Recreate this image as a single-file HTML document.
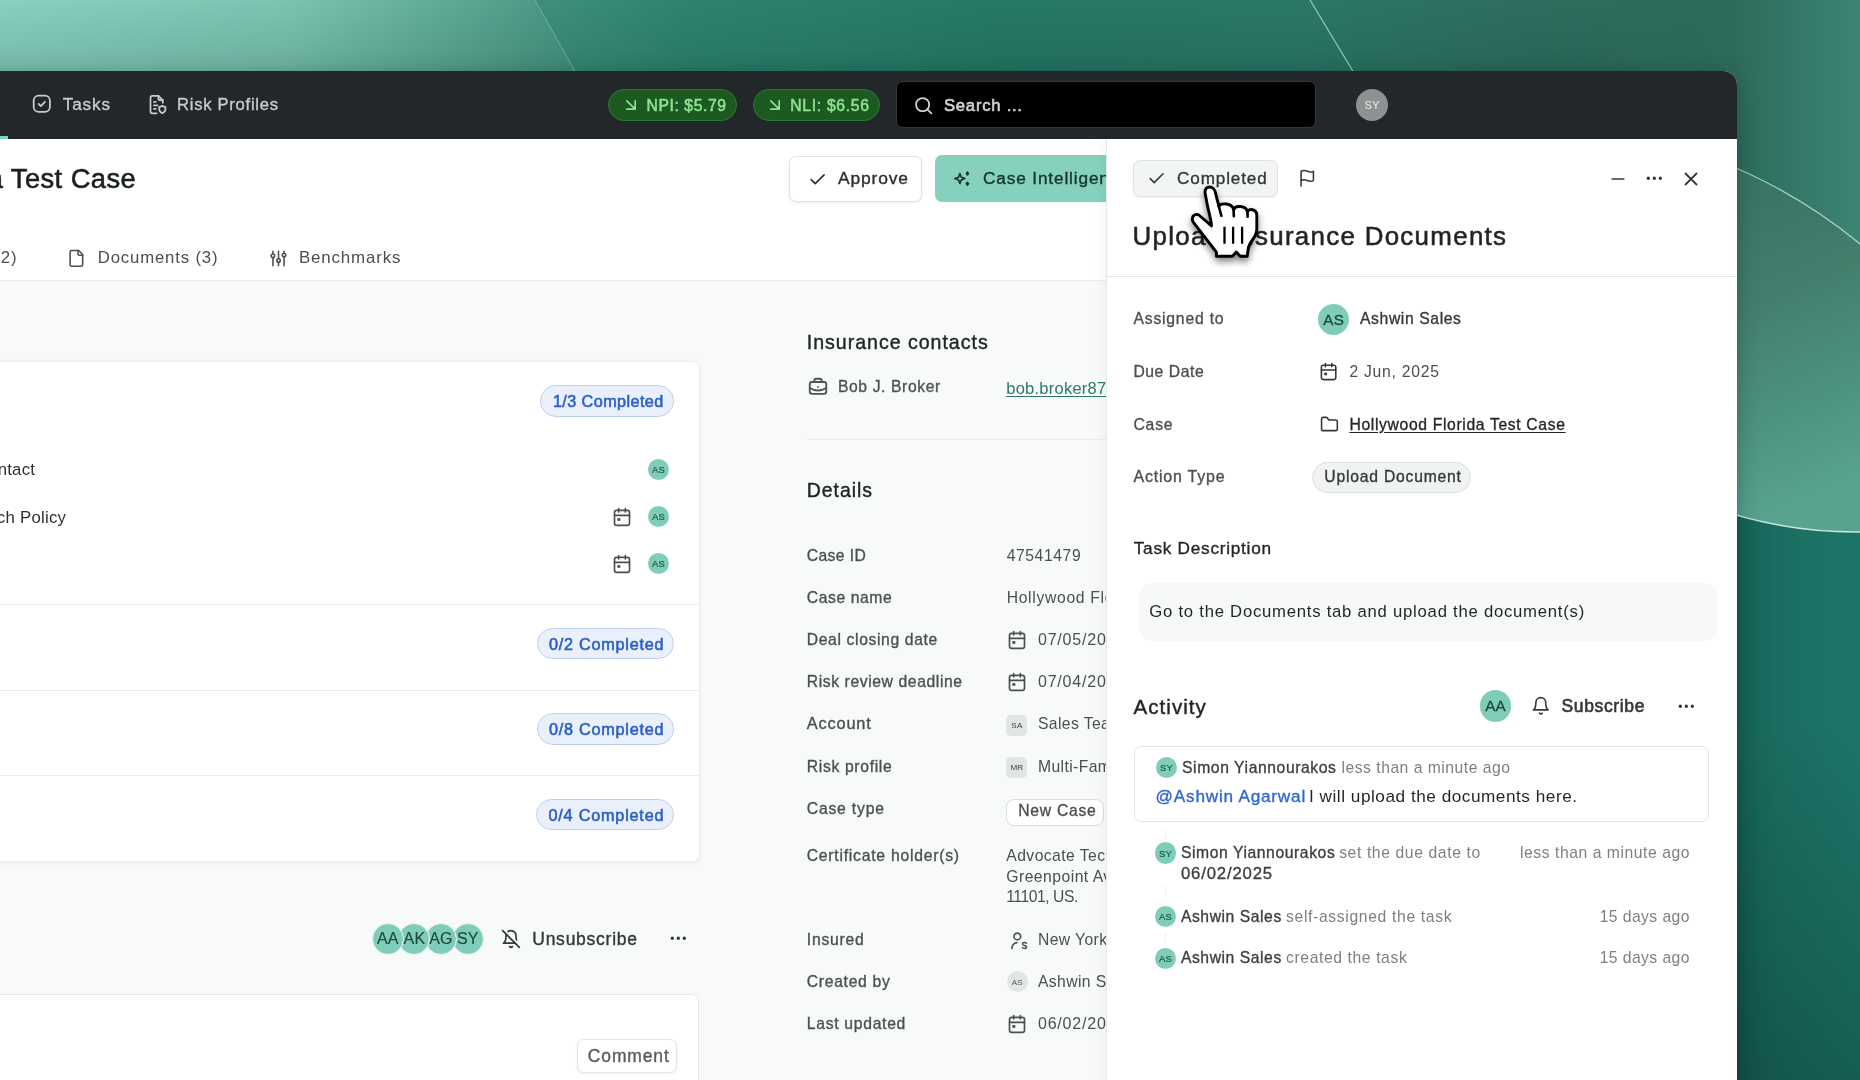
<!DOCTYPE html>
<html lang="en"><head><meta charset="utf-8"><title>Upload Insurance Documents</title>
<style>
html,body{margin:0;padding:0}
body{width:1860px;height:1080px;overflow:hidden;position:relative;background:#2a7a69;font-family:"Liberation Sans",sans-serif}
.a{position:absolute;box-sizing:border-box}
.t{position:absolute;white-space:nowrap;font-family:"Liberation Sans",sans-serif}
.ly{position:absolute;left:0;top:0;width:1860px;height:1080px;will-change:transform;pointer-events:none}
svg.i{position:absolute;fill:none;stroke-width:2;stroke-linecap:round;stroke-linejoin:round;overflow:visible}
.pill{position:absolute;box-sizing:border-box;border-radius:16px;background:#e9f0fc;border:1px solid #bfd0ee;z-index:3}
.av{position:absolute;border-radius:50%;background:#7fcdb8;z-index:3}
.sub{top:923.2px;width:32px;height:32px;box-sizing:border-box;border:1px solid #eef6f3;font-size:16px;line-height:30px;text-align:center;color:#1c4a3e;letter-spacing:.2px;-webkit-text-stroke:.15px #1c4a3e}
.hr{position:absolute;height:1px;background:#e9ecec;z-index:3}
</style></head><body>
<!-- background -->
<svg class="a" style="left:0;top:0;z-index:0" width="1860" height="1080" viewBox="0 0 1860 1080">
<defs>
<linearGradient id="g0" x1="0" y1="0" x2="1860" y2="0" gradientUnits="userSpaceOnUse">
<stop offset="0" stop-color="#3f927e"/><stop offset="0.30" stop-color="#3d8f7b"/><stop offset="0.37" stop-color="#2d8470"/><stop offset="0.54" stop-color="#267967"/><stop offset="0.70" stop-color="#2b7868"/><stop offset="0.81" stop-color="#2f6e60"/><stop offset="0.914" stop-color="#2d6a5b"/><stop offset="0.934" stop-color="#2e6b5c"/><stop offset="0.967" stop-color="#347869"/><stop offset="1" stop-color="#3c8574"/></linearGradient>
<linearGradient id="g1" x1="0" y1="0" x2="575" y2="0" gradientUnits="userSpaceOnUse">
<stop offset="0" stop-color="#8ad1c1"/><stop offset="0.5" stop-color="#7cc4b2"/><stop offset="0.82" stop-color="#5ba693"/><stop offset="1" stop-color="#469481"/></linearGradient>
<linearGradient id="gd" x1="1737" y1="0" x2="1860" y2="0" gradientUnits="userSpaceOnUse">
<stop offset="0" stop-color="#166256"/><stop offset="0.35" stop-color="#1a6e61"/><stop offset="1" stop-color="#1c7668"/></linearGradient>
<linearGradient id="gm" x1="1737" y1="0" x2="1860" y2="0" gradientUnits="userSpaceOnUse">
<stop offset="0" stop-color="#2e6b5c"/><stop offset="0.5" stop-color="#347869"/><stop offset="1" stop-color="#3c8574"/></linearGradient>
<linearGradient id="gl" x1="1737" y1="200" x2="1860" y2="480" gradientUnits="userSpaceOnUse">
<stop offset="0" stop-color="#3a7464"/><stop offset="0.35" stop-color="#447f6e"/><stop offset="0.7" stop-color="#4d9280"/><stop offset="1" stop-color="#58a390"/></linearGradient>
<linearGradient id="gv" x1="0" y1="720" x2="0" y2="1080" gradientUnits="userSpaceOnUse"><stop offset="0" stop-color="#06241e" stop-opacity="0"/><stop offset="1" stop-color="#06241e" stop-opacity=".3"/></linearGradient>
<linearGradient id="gt" x1="0" y1="0" x2="0" y2="71" gradientUnits="userSpaceOnUse"><stop offset="0" stop-color="#0c3a30" stop-opacity="0"/><stop offset="1" stop-color="#0c3a30" stop-opacity=".16"/></linearGradient>
<linearGradient id="gh" x1="1560" y1="0" x2="1737" y2="0" gradientUnits="userSpaceOnUse"><stop offset="0" stop-color="#fff"/><stop offset="1" stop-color="#000"/></linearGradient>
<mask id="tmask" maskUnits="userSpaceOnUse" x="0" y="0" width="1860" height="72"><rect x="0" y="0" width="1860" height="72" fill="url(#gh)"/></mask>
<clipPath id="cR"><rect x="1700" y="71" width="160" height="1009"/></clipPath>
<clipPath id="cB"><circle cx="1856" cy="101" r="431"/></clipPath>
</defs>
<rect width="1860" height="1080" fill="url(#g0)"/>
<polygon points="0,0 535,0 575,71 0,71" fill="url(#g1)"/>
<rect x="0" y="0" width="1860" height="72" fill="url(#gt)" mask="url(#tmask)"/>
<line x1="535" y1="0" x2="576" y2="73" stroke="#9fd9cb" stroke-opacity=".45" stroke-width="1"/>
<line x1="1310" y1="0" x2="1354" y2="73" stroke="#bfe6dc" stroke-opacity=".7" stroke-width="1.300"/>
<rect x="1700" y="71" width="160" height="1009" fill="url(#gd)"/>
<rect x="1700" y="720" width="160" height="360" fill="url(#gv)"/>
<g clip-path="url(#cR)">
<g clip-path="url(#cB)">
<rect x="1700" y="0" width="160" height="560" fill="url(#gm)"/>
<circle cx="1524.6" cy="652.5" r="528.6" fill="url(#gl)"/>
<circle cx="1524.6" cy="652.5" r="528.6" fill="none" stroke="#c9ece3" stroke-opacity=".75" stroke-width="1.2"/>
</g>
<circle cx="1856" cy="101" r="431" fill="none" stroke="#e4f6f1" stroke-opacity=".85" stroke-width="1.4"/>
</g>
</svg>

<!-- window -->
<div class="a" style="left:-60px;top:71px;width:1797px;height:1100px;border-radius:0 14px 0 0;background:#f8fafa;box-shadow:0 5px 22px 0 rgba(0,0,0,.26);z-index:1"></div>
<div class="a" style="left:0;top:71px;width:1737px;height:68px;border-radius:0 14px 0 0;background:#222829;z-index:2"></div>
<div class="a" style="left:0;top:136px;width:8px;height:3px;background:#7fd1bd;z-index:3"></div>
<div class="a" style="left:0;top:139px;width:1737px;height:142px;background:#fff;border-bottom:1px solid #e9ecec;z-index:2"></div>

<!-- nav -->
<svg class="i" style="left:31.2px;top:92.9px;z-index:3" width="21.6" height="21.6" viewBox="0 0 24 24" stroke="#c9cccd"><rect x="3" y="3" width="18" height="18" rx="5.5"/><path d="m8.5 12.2 2.4 2.4 4.6-4.8"/></svg>
<svg class="i" style="left:147px;top:93.5px;z-index:3" width="21" height="21" viewBox="0 0 24 24" stroke="#c9cccd"><path d="M13 2H6a2 2 0 0 0-2 2v16a2 2 0 0 0 2 2h5"/><path d="M13 2l5 5v3"/><path d="M13 2v3a2 2 0 0 0 2 2h3"/><path d="M8 9h2M8 13h4M8 17h2"/><path d="M17.5 13.5c1.3.9 2.6 1.2 3.5 1.2v3.1c0 2-1.6 3.3-3.5 4.2-1.900-.9-3.5-2.2-3.5-4.200v-3.100c.9 0 2.200-.3 3.500-1.200z"/></svg>
<div class="a" style="left:608px;top:89px;width:129px;height:32px;border-radius:16px;background:#1d5a21;border:1px solid #2d7a31;z-index:3"></div>
<div class="a" style="left:752.5px;top:89px;width:127.5px;height:32px;border-radius:16px;background:#1d5a21;border:1px solid #2d7a31;z-index:3"></div>
<svg class="i" style="left:621.25px;top:95px;z-index:4" width="20" height="20" viewBox="0 0 24 24" stroke="#8fe08f" stroke-width="2.4"><path d="m7 7 10 10M17 7v10H7"/></svg>
<svg class="i" style="left:765px;top:95px;z-index:4" width="20" height="20" viewBox="0 0 24 24" stroke="#8fe08f" stroke-width="2.4"><path d="m7 7 10 10M17 7v10H7"/></svg>
<div class="a" style="left:896px;top:81px;width:420px;height:47px;border-radius:7px;background:#000;border:1px solid #34393a;z-index:3"></div>
<svg class="i" style="left:912.75px;top:94.5px;z-index:4" width="21" height="21" viewBox="0 0 24 24" stroke="#d0d3d4" stroke-width="2.2"><circle cx="11" cy="11" r="7.5"/><path d="m21 21-4.6-4.6"/></svg>
<div class="a" style="left:1356px;top:89.2px;width:32px;height:32px;border-radius:50%;background:#8d9192;z-index:3"></div>

<!-- header -->
<div class="a" style="left:789px;top:155.5px;width:133px;height:46px;border-radius:7px;background:#fff;border:1px solid #e1e4e4;box-shadow:0 1px 3px rgba(0,0,0,.08);z-index:3"></div>
<svg class="i" style="left:807.6px;top:169.5px;z-index:4" width="19.3" height="19.3" viewBox="0 0 24 24" stroke="#2a2f31" stroke-width="2"><path d="M20 6 9 17l-5-5"/></svg>
<div class="a" style="left:935px;top:154.5px;width:200px;height:47.5px;border-radius:7px;background:#86d1be;z-index:3"></div>
<svg class="i" style="left:952px;top:168.75px;z-index:4" width="20" height="20" viewBox="0 0 24 24" stroke="#14352d" stroke-width="2"><path d="M9.500 5.500l1.600 4.400 4.400 1.600-4.400 1.600-1.600 4.400-1.600-4.400-4.400-1.600 4.400-1.600z"/><path d="M18.500 3.600l1.500 1.900-1.500 1.900-1.500-1.900zM18.500 15.800l1.500 1.900-1.500 1.900-1.500-1.900z" fill="#14352d" stroke-width="1.500"/></svg>
<svg class="i" style="left:67.1px;top:248.6px;z-index:4" width="18.800" height="18.800" viewBox="0 0 24 24" stroke="#4a5052"><path d="M15 2H6a2 2 0 0 0-2 2v16a2 2 0 0 0 2 2h12a2 2 0 0 0 2-2V7Z"/><path d="M14 2v4a2 2 0 0 0 2 2h4"/></svg>
<svg class="i" style="left:269px;top:248.5px;z-index:4" width="19" height="19" viewBox="0 0 24 24" stroke="#4a5052"><path d="M5 3v3M5 11v10M12 3v9M12 17v4M19 3v2M19 10v11"/><circle cx="5" cy="8.500" r="2.200"/><circle cx="12" cy="14.500" r="2.200"/><circle cx="19" cy="7.500" r="2.200"/></svg>

<!-- left card -->
<div class="a" style="left:-40px;top:361px;width:739.5px;height:500.5px;border-radius:7px;background:#fff;border:1px solid #eceff0;box-shadow:0 1px 4px rgba(0,0,0,.07);z-index:2"></div>
<div class="hr" style="left:0;top:604px;width:699px"></div>
<div class="hr" style="left:0;top:690px;width:699px"></div>
<div class="hr" style="left:0;top:775px;width:699px"></div>
<div class="pill" style="left:540.4px;top:385px;width:133.6px;height:31.500px"></div>
<div class="pill" style="left:537px;top:627.5px;width:137px;height:31.500px"></div>
<div class="pill" style="left:537px;top:713.2px;width:137px;height:31.500px"></div>
<div class="pill" style="left:536px;top:798.5px;width:138px;height:31.500px"></div>
<div class="av" style="left:647.9px;top:458.6px;width:21px;height:21px"></div>
<div class="av" style="left:647.9px;top:506.1px;width:21px;height:21px"></div>
<div class="av" style="left:647.9px;top:553.3px;width:21px;height:21px"></div>
<svg class="i" style="left:611.85px;top:506.7px;z-index:4" width="20" height="20" viewBox="0 0 24 24" stroke="#4a5052"><rect x="3" y="4" width="18" height="18" rx="2.500"/><path d="M16 2v4M8 2v4M3 10h18"/><rect x="7.300" y="13.800" width="2.300" height="2.300" fill="#4a5052" stroke-width="1"/></svg>
<svg class="i" style="left:611.85px;top:553.8px;z-index:4" width="20" height="20" viewBox="0 0 24 24" stroke="#4a5052"><rect x="3" y="4" width="18" height="18" rx="2.500"/><path d="M16 2v4M8 2v4M3 10h18"/><rect x="7.300" y="13.800" width="2.300" height="2.300" fill="#4a5052" stroke-width="1"/></svg>
<!-- subscribers row -->
<div class="av sub" style="left:371.800px;z-index:9">AA</div>
<div class="av sub" style="left:398.400px;z-index:8">AK</div>
<div class="av sub" style="left:425px;z-index:7">AG</div>
<div class="av sub" style="left:451.800px;z-index:6">SY</div>
<svg class="i" style="left:501px;top:928.9px;z-index:4" width="20" height="20" viewBox="0 0 24 24" stroke="#33383a"><path d="M8.700 3A6 6 0 0 1 18 8a21.300 21.300 0 0 0 .6 5"/><path d="M17 17H3s3-2 3-9a4.670 4.670 0 0 1 .3-1.700"/><path d="M10.300 21a1.940 1.940 0 0 0 3.400 0"/><path d="m2 2 20 20"/></svg>
<svg class="i" style="left:668px;top:928.2px;z-index:4" width="20.600" height="20.600" viewBox="0 0 24 24" stroke="#33383a" fill="#33383a"><circle cx="5" cy="12" r="1"/><circle cx="12" cy="12" r="1"/><circle cx="19" cy="12" r="1"/></svg>
<div class="a" style="left:-40px;top:994px;width:739px;height:140px;border-radius:7px;background:#fff;border:1px solid #e6e9e9;z-index:2"></div>
<div class="a" style="left:576.7px;top:1039.3px;width:100.6px;height:34px;border-radius:7px;background:#fff;border:1px solid #e3e6e6;box-shadow:0 1px 3px rgba(0,0,0,.07);z-index:3"></div>

<!-- middle column -->
<svg class="i" style="left:806.7px;top:375.500px;z-index:4" width="22" height="22" viewBox="0 0 24 24" stroke="#4d5254" stroke-width="1.800"><path d="M12 12h.01"/><path d="M16 6.500V5a2 2 0 0 0-2-2h-4a2 2 0 0 0-2 2v1.500"/><path d="M21 13a17 17 0 0 1-18 0"/><rect width="18" height="13" x="3" y="6.500" rx="2.500"/></svg>
<div class="hr" style="left:807px;top:439px;width:300px"></div>
<svg class="i" style="left:1007.3px;top:630.1px;z-index:4" width="20" height="20" viewBox="0 0 24 24" stroke="#4a5052"><rect x="3" y="4" width="18" height="18" rx="2.500"/><path d="M16 2v4M8 2v4M3 10h18"/><rect x="7.300" y="13.800" width="2.300" height="2.300" fill="#4a5052" stroke-width="1"/></svg>
<svg class="i" style="left:1007.3px;top:672.3px;z-index:4" width="20" height="20" viewBox="0 0 24 24" stroke="#4a5052"><rect x="3" y="4" width="18" height="18" rx="2.500"/><path d="M16 2v4M8 2v4M3 10h18"/><rect x="7.300" y="13.800" width="2.300" height="2.300" fill="#4a5052" stroke-width="1"/></svg>
<svg class="i" style="left:1007.3px;top:1014.4px;z-index:4" width="20" height="20" viewBox="0 0 24 24" stroke="#4a5052"><rect x="3" y="4" width="18" height="18" rx="2.500"/><path d="M16 2v4M8 2v4M3 10h18"/><rect x="7.300" y="13.800" width="2.300" height="2.300" fill="#4a5052" stroke-width="1"/></svg>
<div class="a" style="left:1006.3px;top:715px;width:21px;height:21px;border-radius:5px;background:#e2e5e5;z-index:3"></div>
<div class="a" style="left:1006.3px;top:757px;width:21px;height:21px;border-radius:5px;background:#e2e5e5;z-index:3"></div>
<div class="a" style="left:1005.500px;top:798.8px;width:98.500px;height:26.800px;border-radius:8px;background:#fff;border:1px solid #d9dddd;z-index:3"></div>
<svg class="i" style="left:1009px;top:930.500px;z-index:4" width="20" height="20" viewBox="0 0 24 24" stroke="#4a5052"><circle cx="10" cy="6.500" r="4"/><path d="M3.500 21a6.500 6.500 0 0 1 6-7"/><path d="M21 14.800c-.6-.7-1.500-1-2.500-1-1.400 0-2.400.7-2.400 1.800 0 2.400 5 1.200 5 3.600 0 1.100-1.100 1.800-2.500 1.800-1.100 0-2-.4-2.600-1.100" stroke-width="1.700"/></svg>
<div class="a" style="left:1006.7px;top:971.4px;width:21px;height:21px;border-radius:50%;background:#e2e5e5;z-index:3"></div>

<!-- task panel -->
<div class="a" style="left:1106px;top:139px;width:631px;height:960px;background:#fff;border-left:1px solid #e6e9e9;box-shadow:-5px 0 12px rgba(20,40,40,.03);z-index:10"></div>
<div class="a" style="left:1133px;top:160px;width:145px;height:36.500px;border-radius:7px;background:#f3f5f5;border:1px solid #dfe3e3;box-shadow:0 1px 2px rgba(0,0,0,.05);z-index:11"></div>
<svg class="i" style="left:1147.1px;top:169.4px;z-index:12" width="19.200" height="19.200" viewBox="0 0 24 24" stroke="#33383a"><path d="M20 6 9 17l-5-5"/></svg>
<svg class="i" style="left:1298.300px;top:169.400px;z-index:12" width="18.500" height="18.500" viewBox="0 0 24 24" stroke="#33383a"><path d="M4 15s1-1 4-1 5 2 8 2 4-1 4-1V3s-1 1-4 1-5-2-8-2-4 1-4 1z"/><path d="M4 22v-7"/></svg>
<svg class="i" style="left:1607.800px;top:168.500px;z-index:12" width="20" height="20" viewBox="0 0 24 24" stroke="#33383a"><path d="M5 12h14"/></svg>
<svg class="i" style="left:1644.450px;top:168.200px;z-index:12" width="20.600" height="20.600" viewBox="0 0 24 24" stroke="#33383a" fill="#33383a"><circle cx="5" cy="12" r="1"/><circle cx="12" cy="12" r="1"/><circle cx="19" cy="12" r="1"/></svg>
<svg class="i" style="left:1680px;top:167.500px;z-index:12" width="22" height="22" viewBox="0 0 24 24" stroke="#33383a"><path d="M18 6 6 18M6 6l12 12"/></svg>
<div class="hr" style="left:1107px;top:276px;width:630px;z-index:11;background:#e3e6e6"></div>
<div class="av" style="left:1317.800px;top:303.500px;width:31.600px;height:31.600px;z-index:11"></div>
<svg class="i" style="left:1318.850px;top:362.050px;z-index:12" width="19.200" height="19.200" viewBox="0 0 24 24" stroke="#33383a"><rect x="3" y="4" width="18" height="18" rx="2.500"/><path d="M16 2v4M8 2v4M3 10h18"/><rect x="7.300" y="13.800" width="2.300" height="2.300" fill="#33383a" stroke-width="1"/></svg>
<svg class="i" style="left:1319.500px;top:414.100px;z-index:12" width="18.900" height="20.600" viewBox="0 0 24 24" preserveAspectRatio="none" stroke="#33383a"><path d="M20 19.500a2 2 0 0 0 2-2V9a2 2 0 0 0-2-2h-7.900a2 2 0 0 1-1.690-.9L9.600 4.900A2 2 0 0 0 7.930 4H4a2 2 0 0 0-2 2v11.500a2 2 0 0 0 2 2Z"/></svg>
<div class="a" style="left:1312px;top:462.300px;width:159px;height:30.800px;border-radius:16px;background:#f1f3f3;border:1px solid #dde0e0;z-index:11"></div>
<div class="a" style="left:1139px;top:583px;width:578.5px;height:57.500px;border-radius:14px;background:#f7f9f9;z-index:11"></div>
<div class="av" style="left:1479.500px;top:690px;width:31.800px;height:31.800px;z-index:11"></div>
<svg class="i" style="left:1530.500px;top:696px;z-index:12" width="19.600" height="19.600" viewBox="0 0 24 24" stroke="#33383a"><path d="M6 8a6 6 0 0 1 12 0c0 7 3 9 3 9H3s3-2 3-9"/><path d="M10.300 21a1.940 1.940 0 0 0 3.400 0"/></svg>
<svg class="i" style="left:1675.600px;top:695.500px;z-index:12" width="20.600" height="20.600" viewBox="0 0 24 24" stroke="#33383a" fill="#33383a"><circle cx="5" cy="12" r="1"/><circle cx="12" cy="12" r="1"/><circle cx="19" cy="12" r="1"/></svg>
<div class="a" style="left:1134.200px;top:746.300px;width:575px;height:75.600px;border-radius:7px;background:#fff;border:1px solid #dde2e2;z-index:11"></div>
<div class="av" style="left:1155.850px;top:756.950px;width:21.300px;height:21.300px;z-index:12"></div>
<div class="av" style="left:1154.650px;top:842.450px;width:21.300px;height:21.300px;z-index:12"></div>
<div class="av" style="left:1154.650px;top:905.750px;width:21.300px;height:21.300px;z-index:12"></div>
<div class="av" style="left:1154.650px;top:947.550px;width:21.300px;height:21.300px;z-index:12"></div>
<div class="a" style="left:1164.500px;top:829px;width:1px;height:10px;background:#eff1f1;z-index:11"></div>
<div class="a" style="left:1164.500px;top:885px;width:1px;height:13px;background:#eff1f1;z-index:11"></div>
<div class="a" style="left:1164.500px;top:932px;width:1px;height:10px;background:#eff1f1;z-index:11"></div>

<div class="ly" style="z-index:5">
<span class="t" style="font-size:17.14px;line-height:24px;color:#c9cccd;top:91.70px;letter-spacing:0.865px;font-weight:400;-webkit-text-stroke:0.36px currentColor;left:62.72px;">Tasks</span>
<span class="t" style="font-size:16.6px;line-height:24px;color:#c9cccd;top:92.70px;letter-spacing:0.731px;font-weight:400;-webkit-text-stroke:0.35px currentColor;left:177.00px;">Risk Profiles</span>
<span class="t" style="font-size:15.69px;line-height:24px;color:#8fe08f;top:93.50px;letter-spacing:0.584px;font-weight:400;-webkit-text-stroke:0.56px currentColor;left:646.56px;">NPI: $5.79</span>
<span class="t" style="font-size:15.69px;line-height:24px;color:#8fe08f;top:93.50px;letter-spacing:0.694px;font-weight:400;-webkit-text-stroke:0.56px currentColor;left:790.31px;">NLI: $6.56</span>
<span class="t" style="font-size:16.7px;line-height:24px;color:#d0d3d4;top:93.50px;letter-spacing:0.731px;font-weight:400;-webkit-text-stroke:0.60px currentColor;left:944.00px;">Search ...</span>
<span class="t" style="font-size:10.63px;line-height:24px;color:#dfe2e2;top:92.90px;letter-spacing:0.300px;font-weight:400;-webkit-text-stroke:0.22px currentColor;left:1272.15px;width:200px;text-align:center;">SY</span>
<span class="t" style="font-size:27.32px;line-height:24px;color:#1a1f21;top:167.00px;letter-spacing:0.416px;font-weight:400;-webkit-text-stroke:0.57px currentColor;right:1723.95px;">Hollywood Florida Test Case</span>
<span class="t" style="font-size:17.41px;line-height:24px;color:#2a2f31;top:166.25px;letter-spacing:0.860px;font-weight:400;-webkit-text-stroke:0.37px currentColor;left:837.96px;">Approve</span>
<span class="t" style="font-size:17.23px;line-height:24px;color:#14352d;top:166.25px;letter-spacing:0.858px;font-weight:400;-webkit-text-stroke:0.36px currentColor;left:982.97px;">Case Intelligence</span>
<span class="t" style="font-size:16.74px;line-height:24px;color:#4a4f51;top:245.90px;letter-spacing:0.834px;font-weight:400;right:1842.66px;">Tasks (12)</span>
<span class="t" style="font-size:16.74px;line-height:24px;color:#4a4f51;top:245.90px;letter-spacing:0.834px;font-weight:400;left:97.75px;">Documents (3)</span>
<span class="t" style="font-size:16.91px;line-height:24px;color:#4a4f51;top:245.90px;letter-spacing:0.837px;font-weight:400;left:298.99px;">Benchmarks</span>
<span class="t" style="font-size:16.8px;line-height:24px;color:#2a2f31;top:458.00px;letter-spacing:0.250px;font-weight:400;right:1824.74px;">Add Insurance Contact</span>
<span class="t" style="font-size:16.8px;line-height:24px;color:#2a2f31;top:505.50px;letter-spacing:0.250px;font-weight:400;right:1793.74px;">Attach Policy</span>
<span class="t" style="font-size:16.19px;line-height:24px;color:#2c60c4;top:388.60px;letter-spacing:0.420px;font-weight:400;-webkit-text-stroke:0.58px currentColor;left:552.93px;">1/3 Completed</span>
<span class="t" style="font-size:16.19px;line-height:24px;color:#2c60c4;top:631.70px;letter-spacing:0.762px;font-weight:400;-webkit-text-stroke:0.58px currentColor;left:549.03px;">0/2 Completed</span>
<span class="t" style="font-size:16.19px;line-height:24px;color:#2c60c4;top:717.40px;letter-spacing:0.762px;font-weight:400;-webkit-text-stroke:0.58px currentColor;left:549.03px;">0/8 Completed</span>
<span class="t" style="font-size:16.19px;line-height:24px;color:#2c60c4;top:802.70px;letter-spacing:0.804px;font-weight:400;-webkit-text-stroke:0.58px currentColor;left:548.53px;">0/4 Completed</span>
<span class="t" style="font-size:9.41px;line-height:24px;color:#1d5a4b;top:457.50px;letter-spacing:0.200px;font-weight:400;-webkit-text-stroke:0.20px currentColor;left:558.50px;width:200px;text-align:center;">AS</span>
<span class="t" style="font-size:9.41px;line-height:24px;color:#1d5a4b;top:505.00px;letter-spacing:0.200px;font-weight:400;-webkit-text-stroke:0.20px currentColor;left:558.50px;width:200px;text-align:center;">AS</span>
<span class="t" style="font-size:9.41px;line-height:24px;color:#1d5a4b;top:552.20px;letter-spacing:0.200px;font-weight:400;-webkit-text-stroke:0.20px currentColor;left:558.50px;width:200px;text-align:center;">AS</span>
<span class="t" style="font-size:17.51px;line-height:24px;color:#33383a;top:926.80px;letter-spacing:0.752px;font-weight:400;-webkit-text-stroke:0.37px currentColor;left:532.25px;">Unsubscribe</span>
<span class="t" style="font-size:17.47px;line-height:24px;color:#585d5f;top:1043.50px;letter-spacing:0.875px;font-weight:400;-webkit-text-stroke:0.37px currentColor;left:587.85px;">Comment</span>
<span class="t" style="font-size:19.59px;line-height:24px;color:#1f2426;top:329.70px;letter-spacing:0.980px;font-weight:400;-webkit-text-stroke:0.41px currentColor;left:806.72px;">Insurance contacts</span>
<span class="t" style="font-size:15.69px;line-height:24px;color:#4d5254;top:374.50px;letter-spacing:0.603px;font-weight:400;-webkit-text-stroke:0.33px currentColor;left:837.96px;">Bob J. Broker</span>
<span class="t" style="font-size:16.5px;line-height:24px;color:#2b7a66;top:376.00px;letter-spacing:0.248px;font-weight:400;text-decoration:underline;text-underline-offset:2px;left:1006.21px;">bob.broker87@gmail.com</span>
<span class="t" style="font-size:19.47px;line-height:24px;color:#1f2426;top:478.00px;letter-spacing:0.973px;font-weight:400;-webkit-text-stroke:0.41px currentColor;left:806.73px;">Details</span>
<span class="t" style="font-size:15.69px;line-height:24px;color:#4a4f51;top:544.00px;letter-spacing:0.385px;font-weight:400;-webkit-text-stroke:0.33px currentColor;left:806.76px;">Case ID</span>
<span class="t" style="font-size:15.69px;line-height:24px;color:#4a4f51;top:585.70px;letter-spacing:0.594px;font-weight:400;-webkit-text-stroke:0.33px currentColor;left:806.76px;">Case name</span>
<span class="t" style="font-size:15.69px;line-height:24px;color:#4a4f51;top:628.10px;letter-spacing:0.633px;font-weight:400;-webkit-text-stroke:0.33px currentColor;left:806.76px;">Deal closing date</span>
<span class="t" style="font-size:15.69px;line-height:24px;color:#4a4f51;top:670.30px;letter-spacing:0.600px;font-weight:400;-webkit-text-stroke:0.33px currentColor;left:806.76px;">Risk review deadline</span>
<span class="t" style="font-size:16.38px;line-height:24px;color:#4a4f51;top:711.00px;letter-spacing:0.826px;font-weight:400;-webkit-text-stroke:0.34px currentColor;left:806.72px;">Account</span>
<span class="t" style="font-size:15.69px;line-height:24px;color:#4a4f51;top:754.60px;letter-spacing:0.672px;font-weight:400;-webkit-text-stroke:0.33px currentColor;left:806.76px;">Risk profile</span>
<span class="t" style="font-size:15.74px;line-height:24px;color:#4a4f51;top:796.60px;letter-spacing:0.792px;font-weight:400;-webkit-text-stroke:0.33px currentColor;left:806.76px;">Case type</span>
<span class="t" style="font-size:15.69px;line-height:24px;color:#4a4f51;top:844.00px;letter-spacing:0.770px;font-weight:400;-webkit-text-stroke:0.33px currentColor;left:806.76px;">Certificate holder(s)</span>
<span class="t" style="font-size:15.69px;line-height:24px;color:#4a4f51;top:928.00px;letter-spacing:0.776px;font-weight:400;-webkit-text-stroke:0.33px currentColor;left:806.76px;">Insured</span>
<span class="t" style="font-size:15.69px;line-height:24px;color:#4a4f51;top:969.60px;letter-spacing:0.704px;font-weight:400;-webkit-text-stroke:0.33px currentColor;left:806.76px;">Created by</span>
<span class="t" style="font-size:15.69px;line-height:24px;color:#4a4f51;top:1012.40px;letter-spacing:0.715px;font-weight:400;-webkit-text-stroke:0.33px currentColor;left:806.76px;">Last updated</span>
<span class="t" style="font-size:15.69px;line-height:24px;color:#4a4f51;top:544.00px;letter-spacing:0.596px;font-weight:400;left:1006.66px;">47541479</span>
<span class="t" style="font-size:15.69px;line-height:24px;color:#4a4f51;top:585.70px;letter-spacing:0.688px;font-weight:400;left:1006.66px;">Hollywood Florida Test Case</span>
<span class="t" style="font-size:16.0px;line-height:24px;color:#4a4f51;top:628.10px;letter-spacing:0.800px;font-weight:400;left:1037.94px;">07/05/2025</span>
<span class="t" style="font-size:16.0px;line-height:24px;color:#4a4f51;top:670.30px;letter-spacing:0.800px;font-weight:400;left:1037.94px;">07/04/2025</span>
<span class="t" style="font-size:15.69px;line-height:24px;color:#4a4f51;top:712.00px;letter-spacing:0.408px;font-weight:400;left:1037.96px;">Sales Team</span>
<span class="t" style="font-size:15.69px;line-height:24px;color:#4a4f51;top:754.60px;letter-spacing:0.408px;font-weight:400;left:1037.96px;">Multi-Family</span>
<span class="t" style="font-size:15.69px;line-height:24px;color:#4a4f51;top:798.50px;letter-spacing:0.758px;font-weight:400;-webkit-text-stroke:0.33px currentColor;left:1018.16px;">New Case</span>
<span class="t" style="font-size:15.69px;line-height:24px;color:#4a4f51;top:844.00px;letter-spacing:0.452px;font-weight:400;left:1006.26px;">Advocate Technologies, 12</span>
<span class="t" style="font-size:15.69px;line-height:24px;color:#4a4f51;top:864.60px;letter-spacing:0.482px;font-weight:400;left:1006.26px;">Greenpoint Avenue, NY</span>
<span class="t" style="font-size:15.69px;line-height:24px;color:#4a4f51;top:885.20px;letter-spacing:-0.454px;font-weight:400;left:1006.26px;">11101, US.</span>
<span class="t" style="font-size:15.69px;line-height:24px;color:#4a4f51;top:928.00px;letter-spacing:0.408px;font-weight:400;left:1037.96px;">New York Properties</span>
<span class="t" style="font-size:15.69px;line-height:24px;color:#4a4f51;top:969.60px;letter-spacing:0.408px;font-weight:400;left:1037.96px;">Ashwin Sales</span>
<span class="t" style="font-size:16.0px;line-height:24px;color:#4a4f51;top:1012.40px;letter-spacing:0.800px;font-weight:400;left:1037.94px;">06/02/2025</span>
<span class="t" style="font-size:8.1px;line-height:24px;color:#3a3f41;top:714.30px;letter-spacing:0.200px;font-weight:400;left:916.90px;width:200px;text-align:center;">SA</span>
<span class="t" style="font-size:8.1px;line-height:24px;color:#3a3f41;top:756.30px;letter-spacing:0.200px;font-weight:400;left:916.90px;width:200px;text-align:center;">MR</span>
<span class="t" style="font-size:8.1px;line-height:24px;color:#55595b;top:970.80px;letter-spacing:0.200px;font-weight:400;left:917.30px;width:200px;text-align:center;">AS</span>
</div>
<div class="ly" style="z-index:12">
<span class="t" style="font-size:17.13px;line-height:24px;color:#33383a;top:167.30px;letter-spacing:0.860px;font-weight:400;-webkit-text-stroke:0.36px currentColor;z-index:12;left:1177.07px;">Completed</span>
<span class="t" style="font-size:25.91px;line-height:24px;color:#1f2426;top:224.00px;letter-spacing:1.292px;font-weight:400;-webkit-text-stroke:0.54px currentColor;z-index:12;left:1132.45px;">Upload Insurance Documents</span>
<span class="t" style="font-size:15.73px;line-height:24px;color:#4a4f51;top:307.40px;letter-spacing:0.794px;font-weight:400;-webkit-text-stroke:0.33px currentColor;z-index:12;left:1133.46px;">Assigned to</span>
<span class="t" style="font-size:15.69px;line-height:24px;color:#4a4f51;top:360.20px;letter-spacing:0.557px;font-weight:400;-webkit-text-stroke:0.33px currentColor;z-index:12;left:1133.46px;">Due Date</span>
<span class="t" style="font-size:15.77px;line-height:24px;color:#4a4f51;top:412.70px;letter-spacing:0.790px;font-weight:400;-webkit-text-stroke:0.33px currentColor;z-index:12;left:1133.45px;">Case</span>
<span class="t" style="font-size:15.98px;line-height:24px;color:#4a4f51;top:465.30px;letter-spacing:0.803px;font-weight:400;-webkit-text-stroke:0.34px currentColor;z-index:12;left:1133.44px;">Action Type</span>
<span class="t" style="font-size:15.18px;line-height:24px;color:#174a3d;top:308.00px;letter-spacing:0.200px;font-weight:400;-webkit-text-stroke:0.32px currentColor;z-index:12;left:1233.70px;width:200px;text-align:center;">AS</span>
<span class="t" style="font-size:15.69px;line-height:24px;color:#33383a;top:307.40px;letter-spacing:0.610px;font-weight:400;-webkit-text-stroke:0.33px currentColor;z-index:12;left:1360.06px;">Ashwin Sales</span>
<span class="t" style="font-size:15.69px;line-height:24px;color:#4a4f51;top:360.20px;letter-spacing:0.748px;font-weight:400;z-index:12;left:1349.46px;">2 Jun, 2025</span>
<span class="t" style="font-size:15.69px;line-height:24px;color:#1f2426;top:412.70px;letter-spacing:0.653px;font-weight:400;-webkit-text-stroke:0.33px currentColor;z-index:12;text-decoration:underline;text-underline-offset:2px;left:1349.46px;">Hollywood Florida Test Case</span>
<span class="t" style="font-size:15.69px;line-height:24px;color:#33383a;top:465.30px;letter-spacing:0.786px;font-weight:400;-webkit-text-stroke:0.33px currentColor;z-index:12;left:1324.36px;">Upload Document</span>
<span class="t" style="font-size:17.2px;line-height:24px;color:#1f2426;top:536.40px;letter-spacing:0.745px;font-weight:400;-webkit-text-stroke:0.36px currentColor;z-index:12;left:1133.77px;">Task Description</span>
<span class="t" style="font-size:16.7px;line-height:24px;color:#1f2426;top:600.00px;letter-spacing:0.754px;font-weight:400;z-index:12;left:1149.30px;">Go to the Documents tab and upload the document(s)</span>
<span class="t" style="font-size:20.54px;line-height:24px;color:#1f2426;top:694.50px;letter-spacing:1.028px;font-weight:400;-webkit-text-stroke:0.43px currentColor;z-index:12;left:1133.57px;">Activity</span>
<span class="t" style="font-size:15.18px;line-height:24px;color:#174a3d;top:694.30px;letter-spacing:0.300px;font-weight:400;-webkit-text-stroke:0.32px currentColor;z-index:12;left:1395.55px;width:200px;text-align:center;">AA</span>
<span class="t" style="font-size:17.51px;line-height:24px;color:#33383a;top:693.80px;letter-spacing:0.647px;font-weight:400;-webkit-text-stroke:0.63px currentColor;z-index:12;left:1561.45px;">Subscribe</span>
<span class="t" style="font-size:9.41px;line-height:24px;color:#1d5a4b;top:756.00px;letter-spacing:0.200px;font-weight:400;-webkit-text-stroke:0.20px currentColor;z-index:12;left:1066.60px;width:200px;text-align:center;">SY</span>
<span class="t" style="font-size:15.69px;line-height:24px;color:#3a3f41;top:755.80px;letter-spacing:0.587px;font-weight:400;-webkit-text-stroke:0.33px currentColor;z-index:12;left:1182.06px;">Simon Yiannourakos</span>
<span class="t" style="font-size:15.69px;line-height:24px;color:#7b8082;top:755.80px;letter-spacing:0.501px;font-weight:400;z-index:12;left:1341.56px;">less than a minute ago</span>
<span class="t" style="font-size:17.2px;line-height:24px;color:#2f68cf;top:784.30px;letter-spacing:0.777px;font-weight:400;-webkit-text-stroke:0.36px currentColor;z-index:12;left:1155.57px;">@Ashwin Agarwal</span>
<span class="t" style="font-size:17.2px;line-height:24px;color:#1f2426;top:784.30px;letter-spacing:0.524px;font-weight:400;z-index:12;left:1308.97px;">I will upload the documents here.</span>
<span class="t" style="font-size:9.41px;line-height:24px;color:#1d5a4b;top:841.50px;letter-spacing:0.200px;font-weight:400;-webkit-text-stroke:0.20px currentColor;z-index:12;left:1065.40px;width:200px;text-align:center;">SY</span>
<span class="t" style="font-size:15.69px;line-height:24px;color:#3a3f41;top:841.30px;letter-spacing:0.581px;font-weight:400;-webkit-text-stroke:0.33px currentColor;z-index:12;left:1180.96px;">Simon Yiannourakos</span>
<span class="t" style="font-size:15.69px;line-height:24px;color:#7b8082;top:841.30px;letter-spacing:0.612px;font-weight:400;z-index:12;left:1339.16px;">set the due date to</span>
<span class="t" style="font-size:16.72px;line-height:24px;color:#3a3f41;top:861.60px;letter-spacing:0.850px;font-weight:400;-webkit-text-stroke:0.35px currentColor;z-index:12;left:1180.90px;">06/02/2025</span>
<span class="t" style="font-size:15.69px;line-height:24px;color:#7b8082;top:841.30px;letter-spacing:0.553px;font-weight:400;z-index:12;left:1519.96px;">less than a minute ago</span>
<span class="t" style="font-size:9.41px;line-height:24px;color:#1d5a4b;top:904.80px;letter-spacing:0.200px;font-weight:400;-webkit-text-stroke:0.20px currentColor;z-index:12;left:1065.40px;width:200px;text-align:center;">AS</span>
<span class="t" style="font-size:15.69px;line-height:24px;color:#3a3f41;top:904.60px;letter-spacing:0.556px;font-weight:400;-webkit-text-stroke:0.33px currentColor;z-index:12;left:1180.96px;">Ashwin Sales</span>
<span class="t" style="font-size:15.69px;line-height:24px;color:#7b8082;top:904.60px;letter-spacing:0.655px;font-weight:400;z-index:12;left:1286.06px;">self-assigned the task</span>
<span class="t" style="font-size:15.69px;line-height:24px;color:#7b8082;top:904.60px;letter-spacing:0.430px;font-weight:400;z-index:12;left:1599.66px;">15 days ago</span>
<span class="t" style="font-size:9.41px;line-height:24px;color:#1d5a4b;top:946.60px;letter-spacing:0.200px;font-weight:400;-webkit-text-stroke:0.20px currentColor;z-index:12;left:1065.40px;width:200px;text-align:center;">AS</span>
<span class="t" style="font-size:15.69px;line-height:24px;color:#3a3f41;top:946.40px;letter-spacing:0.556px;font-weight:400;-webkit-text-stroke:0.33px currentColor;z-index:12;left:1180.96px;">Ashwin Sales</span>
<span class="t" style="font-size:15.69px;line-height:24px;color:#7b8082;top:946.40px;letter-spacing:0.604px;font-weight:400;z-index:12;left:1286.06px;">created the task</span>
<span class="t" style="font-size:15.69px;line-height:24px;color:#7b8082;top:946.40px;letter-spacing:0.430px;font-weight:400;z-index:12;left:1599.66px;">15 days ago</span>
</div>

<!-- pointer cursor -->
<svg class="a" style="left:1170px;top:170px;z-index:30;filter:drop-shadow(0 4px 3.5px rgba(0,0,0,.48))" width="110" height="110" viewBox="1170 170 110 110">
<path d="M1211.500 225.900 C1211.300 220 1208.200 210 1207.400 205.200 L1205.100 193.100 C1204 185 1214.400 184.800 1215.500 193.100 L1218.900 206.300 C1220.800 202.600 1232.200 202.800 1233.600 209.700 C1235.200 204.800 1246.200 205.400 1247.500 212 C1248.700 208 1256.800 208.800 1256.800 215.500 L1256.800 229 C1256.800 238.500 1249.200 240.500 1248.200 249 L1247.200 256.200 L1240.300 256.200 L1236.300 252 L1232.500 256.200 L1216.400 256.200 L1216.400 252.100 L1193.600 222.600 C1191.500 220 1191.800 216.500 1194.500 215 C1196 214.200 1197.500 214.200 1198.800 215 Z" fill="#fff" stroke="#000" stroke-width="2.900" stroke-linejoin="round"/>
<path d="M1218.800 206.300 L1221.400 215.800 M1233.600 209.700 L1233.800 216.200 M1247.500 212 L1247.600 216.800" fill="none" stroke="#000" stroke-width="2.600" stroke-linecap="round"/>
<path d="M1224.500 226.800 V243.700 M1233.100 226.800 V243.700 M1242.100 226.800 V243.700" fill="none" stroke="#000" stroke-width="2.300" stroke-linecap="butt"/>
</svg>

</body></html>
